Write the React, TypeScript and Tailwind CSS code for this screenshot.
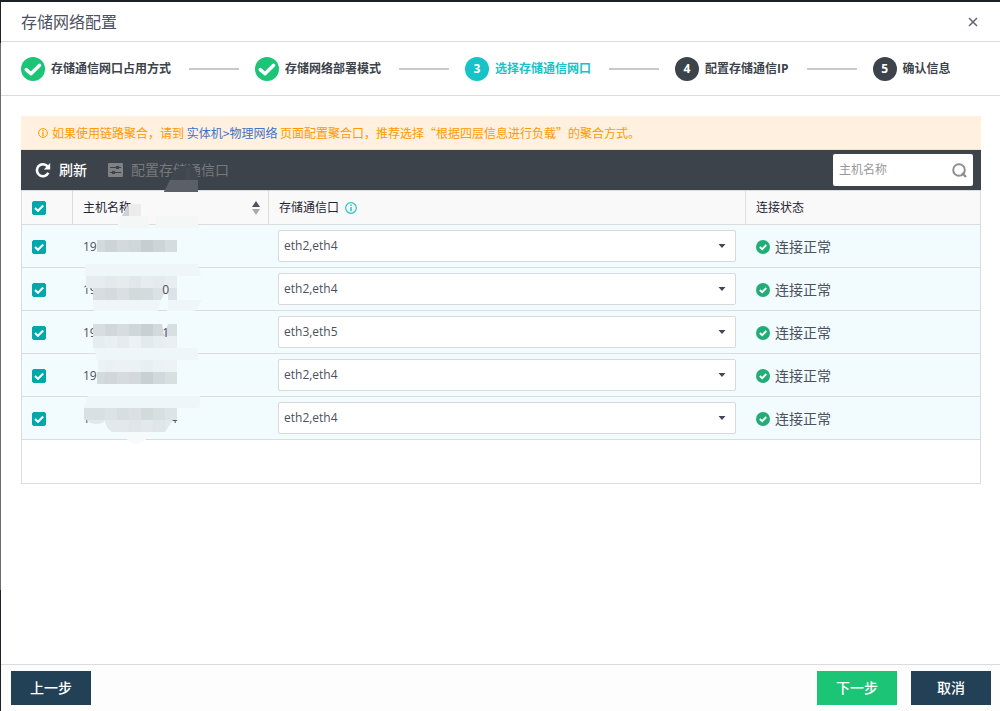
import { useState } from "react"
import clsx from "clsx"

const steps = [
  { id: 1, name: "存储通信网口占用方式", status: "done" },
  { id: 2, name: "存储网络部署模式", status: "done" },
  { id: 3, name: "选择存储通信网口", status: "active" },
  { id: 4, name: "配置存储通信IP", status: "todo" },
  { id: 5, name: "确认信息", status: "todo" },
]

const initialHosts = [
  { id: 1, name: "19", tail: "", ports: "eth2,eth4", checked: true },
  { id: 2, name: "19", tail: "0", ports: "eth2,eth4", checked: true },
  { id: 3, name: "19", tail: "1", ports: "eth3,eth5", checked: true },
  { id: 4, name: "19", tail: "", ports: "eth2,eth4", checked: true },
  { id: 5, name: "19", tail: "4", ports: "eth2,eth4", checked: true },
]

const portOptions = ["eth2,eth4", "eth3,eth5"]

// Mosaic rows: x, y, height and the tone of each block
const mosaic = [
  { x: 97, y: 240, h: 12, tones: ["#d3dadd", "#cdd4d8", "#d3d9dc", "#d0d7da", "#c7ced2", "#cdd4d8", "#d5dcdf"] },
  { x: 86, y: 276, h: 12, tones: ["#e6ecef", "#e3e9ec", "#e6ecee", "#e1e7ea", "#e6ecef", "#e4eaed", "#e7edf0"] },
  { x: 93, y: 288, h: 12, tones: ["#d7dde0", "#d4dadd", "#d9dfe2", "#d3dadc", "#d4dbde", "#dbe1e4"] },
  { x: 93, y: 324, h: 12, tones: ["#d7dde0", "#d1d7da", "#d6dcdf", "#d0d7da", "#c9d0d4", "#d3dadd", "#d8dfe2"] },
  { x: 93, y: 336, h: 12, tones: ["#e6edf0", "#e9eff2", "#e5ebee", "#ebf1f4", "#e3eaed", "#e7edf0", "#e9eff2"] },
  { x: 98, y: 360, h: 12, tones: ["#ecf2f5", "#eaf0f3", "#ecf2f4", "#ebf1f4", "#e8eff2", "#ebf1f4", "#edf3f5"] },
  { x: 97, y: 372, h: 12, tones: ["#d3dadd", "#d0d6d9", "#d5dbde", "#d2d8db", "#c9d0d3", "#d2d9dc", "#d8dfe1"] },
  { x: 84, y: 408, h: 12, tones: ["#d9e0e3", "#dce2e5", "#d7dee0", "#dae0e3", "#d3dadc", "#d8dfe1", "#dde3e6"] },
]

function CheckBox({ label, checked, onChange }: { label: string; checked: boolean; onChange: () => void }) {
  return (
    <label className="grid w-3.5 h-3.5">
      <input
        type="checkbox"
        aria-label={label}
        checked={checked}
        onChange={onChange}
        className="col-start-1 row-start-1 appearance-none w-3.5 h-3.5 rounded-xs border border-[#bbbbbb] bg-white checked:bg-[#00a8ac] checked:border-[#00a8ac]"
      />
      {checked && (
        <svg viewBox="0 0 14 14" className="col-start-1 row-start-1 w-3.5 h-3.5 pointer-events-none">
          <path d="M3 7 L6 9.8 L11.2 4.4" fill="none" stroke="white" strokeWidth="2.1" />
        </svg>
      )}
    </label>
  )
}

function StepBadge({ id, status }: { id: number; status: string }) {
  if (status === "done") {
    return (
      <svg viewBox="0 0 24 24" className="w-6 h-6 shrink-0">
        <circle cx="12" cy="12" r="12" fill="#1bc575" />
        <path
          d="M5.2 12.6 L10 16.8 L18.6 8.2"
          fill="none"
          stroke="white"
          strokeWidth="3.4"
          strokeLinecap="round"
          strokeLinejoin="round"
        />
      </svg>
    )
  }
  return (
    <span
      className={clsx(
        "w-6 h-6 shrink-0 rounded-full flex items-center justify-center text-white",
        status === "active" ? "bg-[#17c2c8]" : "bg-[#3c434b]",
      )}
    >
      {id}
    </span>
  )
}

function MosaicOverlay() {
  return (
    <svg viewBox="72 160 140 290" className="absolute left-[51px] top-2.5 w-[140px] h-[290px] pointer-events-none">
      {/* Toolbar */}
      <path d="M164 192 L170 180 Q175 166 188 165 Q197 166 198 180 V192 Z" fill="#41474f" />
      <path d="M186 168 H190 V180 H186 Z" fill="#454b51" />
      <path d="M170 180 H198 V192 H164 Z" fill="#5b6068" />
      {/* Table head */}
      <path d="M122 216 L129 204 H141 V216 Z" fill="#ececed" />
      <path d="M122 216 L129 205 V216 Z" fill="#cfd0d4" />
      <path d="M120 216 H147 L150 228 H117 Z M157 216 H198 V228 H155 Z" fill="#f5f7f7" />
      {/* Rows */}
      <path d="M86 264 H198 L201 276 H84 Z" fill="#eff6f9" />
      <path d="M93 300 H162 L158 311 H94 Z M167 300 H202 L195 311 H167 Z" fill="#eff6f9" />
      <path d="M94 348 H198 V360 H97 Z" fill="#eff6f9" />
      <path d="M88 396 H200 V406 L198 408 H84 Z" fill="#eff6f9" />
      {mosaic.map((row) =>
        row.tones.map((tone, i) => (
          <rect
            key={`${row.y}-${i}`}
            x={i === 0 ? row.x : 93 + i * 12}
            y={row.y}
            width={i === 0 ? 105 - row.x : 12}
            height={row.h}
            fill={tone}
          />
        )),
      )}
      <path d="M168 288 H177 V300 H168 Z" fill="#dde3e6" />
      <path d="M161 300 L164 294 L168 296 V310 H158 Z" fill="#f2fbfd" />
      <path d="M162 324 L164 335 L168 324 Z" fill="#f2fbfd" />
      <path d="M87 420 H105 Q103 424 96 424 Q90 424 87 420 Z" fill="#e2e8eb" />
      <path d="M105 420 H173 L165 432 H112 Q105 427 105 420 Z" fill="#e2e8eb" />
      <path d="M129 420 H141 V432 H129 Z M153 420 H165 V432 H153 Z" fill="#dfe5e8" />
      <path d="M122 432 H153 Q144 444 135 444 Q128 443 122 432 Z" fill="#f6fafb" />
    </svg>
  )
}

export default function StorageNetworkPage() {
  const [hosts, setHosts] = useState(initialHosts)
  const [keyword, setKeyword] = useState("")

  const allChecked = hosts.every((host) => host.checked)

  const toggleAll = () => setHosts(hosts.map((host) => ({ ...host, checked: !allChecked })))

  const toggleHost = (id: number) =>
    setHosts(hosts.map((host) => (host.id === id ? { ...host, checked: !host.checked } : host)))

  const changePorts = (id: number, ports: string) =>
    setHosts(hosts.map((host) => (host.id === id ? { ...host, ports } : host)))

  return (
    <div className="min-h-screen bg-[#1d2026] flex flex-col pt-0.5 pl-px bg-[linear-gradient(#1d2026_6%,#6a6b6e_6%,#6a6b6e_83%,#1d2026_83%)] font-['Open_Sans','Noto_Sans_CJK_SC',sans-serif] text-xs text-[#1f2433]">
      <div className="flex-1 flex flex-col bg-white">
        {/* Title */}
        <header className="h-10 pl-5 pr-[19px] flex items-center justify-between border-b border-[#dcdcdc]">
          <h1 className="text-base text-[#4b5160]">存储网络配置</h1>
          <button aria-label="关闭" className="p-0.5">
            <svg viewBox="0 0 12 12" className="w-3 h-3">
              <path d="M2 2 L10 10 M10 2 L2 10" stroke="#5d6474" strokeWidth="1.5" />
            </svg>
          </button>
        </header>

        {/* Steps */}
        <ol className="h-[54px] pl-5 flex items-center border-b border-[#dcdcdc] font-bold text-[#3c434b] whitespace-nowrap">
          {steps.map((step, index) => (
            <li key={step.id} className="flex items-center">
              {index > 0 && <span className="w-[50px] h-0.5 ml-[18px] mr-4 bg-[#c9c9c9]" />}
              <StepBadge id={step.id} status={step.status} />
              <span className={clsx("ml-1.5", step.status === "active" && "text-[#17c2c8]")}>{step.name}</span>
            </li>
          ))}
        </ol>

        {/* Content */}
        <main className="flex-1 pl-5 pr-[19px] pt-5">
          <div className="h-[34px] pl-4 flex items-center gap-[3px] bg-[#fff0df] border-b border-[#f3e3cf] text-[#ff9900] font-['Noto_Sans_CJK_SC',sans-serif]">
            <svg viewBox="0 0 12 12" className="w-3 h-3">
              <circle cx="6" cy="6" r="4.4" fill="none" stroke="#ff9900" />
              <path d="M6 3 V4.4 M6 5.2 V9" stroke="#ff9900" strokeWidth="1.3" />
            </svg>
            <p lang="zh-CN">
              如果使用链路聚合，请到{" "}
              <a href="#" className="text-[#3f72c8]">
                实体机&gt;物理网络
              </a>{" "}
              页面配置聚合口，推荐选择“根据四层信息进行负载”的聚合方式。
            </p>
          </div>

          <div className="relative">
            {/* Toolbar */}
            <div className="h-10 pl-3.5 pr-2 flex items-center bg-[#3d434b] text-sm">
              <button className="flex items-center gap-2 text-white font-medium">
                <svg viewBox="0 0 16 16" className="w-4 h-4">
                  <path d="M12.6 4.4 A6 6 0 1 0 13.4 10.8" fill="none" stroke="white" strokeWidth="2.6" />
                  <path d="M15.2 1 V7.4 H8.8 Z" fill="white" />
                </svg>
                刷新
              </button>
              <button disabled className="ml-5 flex items-center gap-2 text-[#777a7c]">
                <svg viewBox="0 0 16 14" className="w-4 h-3.5">
                  <rect x="1" width="15" height="14" rx="1" fill="#808182" />
                  <path d="M3 4.5 H14 M3 9.5 H14" stroke="#3d434b" strokeWidth="1.2" />
                  <path d="M9 3 H12 V6 H9 Z M5 8 H8 V11 H5 Z" fill="#3d434b" />
                </svg>
                配置存储通信口
              </button>
              <div className="ml-auto w-[140px] h-8 px-1.5 flex items-center bg-white rounded-xs text-xs">
                <input
                  type="text"
                  aria-label="主机名称"
                  placeholder="主机名称"
                  value={keyword}
                  onChange={(e) => setKeyword(e.target.value)}
                  className="flex-1 min-w-0 outline-none placeholder:text-[#999999]"
                />
                <button aria-label="搜索">
                  <svg viewBox="0 0 15 15" className="w-[15px] h-[15px]">
                    <circle cx="7" cy="7" r="5.8" fill="none" stroke="#8f8f8f" strokeWidth="2" />
                    <path d="M10 10 L14 14" stroke="#8f8f8f" strokeWidth="2.4" />
                  </svg>
                </button>
              </div>
            </div>

            {/* Hosts */}
            <div className="pb-[43px] border border-[#dcdcdc]">
              <table className="w-full table-fixed border-separate border-spacing-0 text-left">
                <thead className="bg-[#f9f9f9]">
                  <tr className="h-[34px]">
                    <th className="w-[51px] pl-2.5 border-r border-b border-[#dcdcdc]">
                      <CheckBox label="全选" checked={allChecked} onChange={toggleAll} />
                    </th>
                    <th className="w-[196px] pl-2.5 pr-2 font-normal border-r border-b border-[#dcdcdc]">
                      <div className="flex items-center justify-between">
                        主机名称
                        <svg viewBox="0 0 8 14" className="w-2 h-3.5">
                          <path d="M4 0 L8 6 H0 Z" fill="#4b5362" />
                          <path d="M0 8 H8 L4 14 Z" fill="#a9a9a9" />
                        </svg>
                      </div>
                    </th>
                    <th className="pl-2.5 font-normal border-r border-b border-[#dcdcdc]">
                      <div className="flex items-center gap-1.5">
                        存储通信口
                        <svg viewBox="0 0 12 12" className="w-3 h-3">
                          <circle cx="6" cy="6" r="5.3" fill="none" stroke="#25c4ca" strokeWidth="1.2" />
                          <path d="M6 2.6 V4.1 M6 5 V9.2" stroke="#25c4ca" strokeWidth="1.5" />
                        </svg>
                      </div>
                    </th>
                    <th className="w-[234px] pl-2.5 font-normal border-b border-[#dcdcdc]">连接状态</th>
                  </tr>
                </thead>
                <tbody className="bg-[#f2fbfd] text-[#4b5160]">
                  {hosts.map((host) => (
                    <tr key={host.id} className="h-[43px]">
                      <td className="pt-0.5 pl-2.5 border-b border-[#dcdcdc]">
                        <CheckBox label={`主机 ${host.id}`} checked={host.checked} onChange={() => toggleHost(host.id)} />
                      </td>
                      <td className="pt-0.5 pl-2.5 border-b border-[#dcdcdc]">
                        <div className="w-[94px] flex justify-between">
                          <span>{host.name}</span>
                          <span className={host.tail === "4" ? "" : "relative z-10 pr-2"}>{host.tail}</span>
                        </div>
                      </td>
                      <td className="pl-[9px] pr-2.5 border-b border-[#dcdcdc]">
                        <div className="relative flex items-center">
                          <select
                            aria-label="存储通信口"
                            value={host.ports}
                            onChange={(e) => changePorts(host.id, e.target.value)}
                            className="w-full h-8 px-[5px] appearance-none bg-white border border-[#d9d9d9] rounded-xs"
                          >
                            {portOptions.map((option) => (
                              <option key={option}>{option}</option>
                            ))}
                          </select>
                          <svg viewBox="0 0 8 4" className="absolute right-2.5 w-2 h-1 pointer-events-none">
                            <path d="M0.5 0 H7.5 L4 4 Z" fill="#3f4656" />
                          </svg>
                        </div>
                      </td>
                      <td className="pt-0.5 pl-2.5 text-sm border-b border-[#dcdcdc]">
                        <div className="flex items-center gap-[5px]">
                          <svg viewBox="0 0 14 14" className="w-3.5 h-3.5">
                            <circle cx="7" cy="7" r="7" fill="#22ac77" />
                            <path d="M3.8 7 L6.2 9.2 L10.3 5" fill="none" stroke="white" strokeWidth="1.8" />
                          </svg>
                          连接正常
                        </div>
                      </td>
                    </tr>
                  ))}
                </tbody>
              </table>
            </div>

            <MosaicOverlay />
          </div>
        </main>

        {/* Footer */}
        <footer className="h-[47px] pl-2.5 pr-[9px] flex items-center gap-3.5 bg-[#fdfdfd] border-t border-[#dcdcdc] text-sm font-medium text-white">
          <button className="w-20 h-[34px] mr-auto bg-[#224056]">上一步</button>
          <button className="w-20 h-[34px] bg-[#1bc575]">下一步</button>
          <button className="w-20 h-[34px] bg-[#224056]">取消</button>
        </footer>
      </div>
    </div>
  )
}
